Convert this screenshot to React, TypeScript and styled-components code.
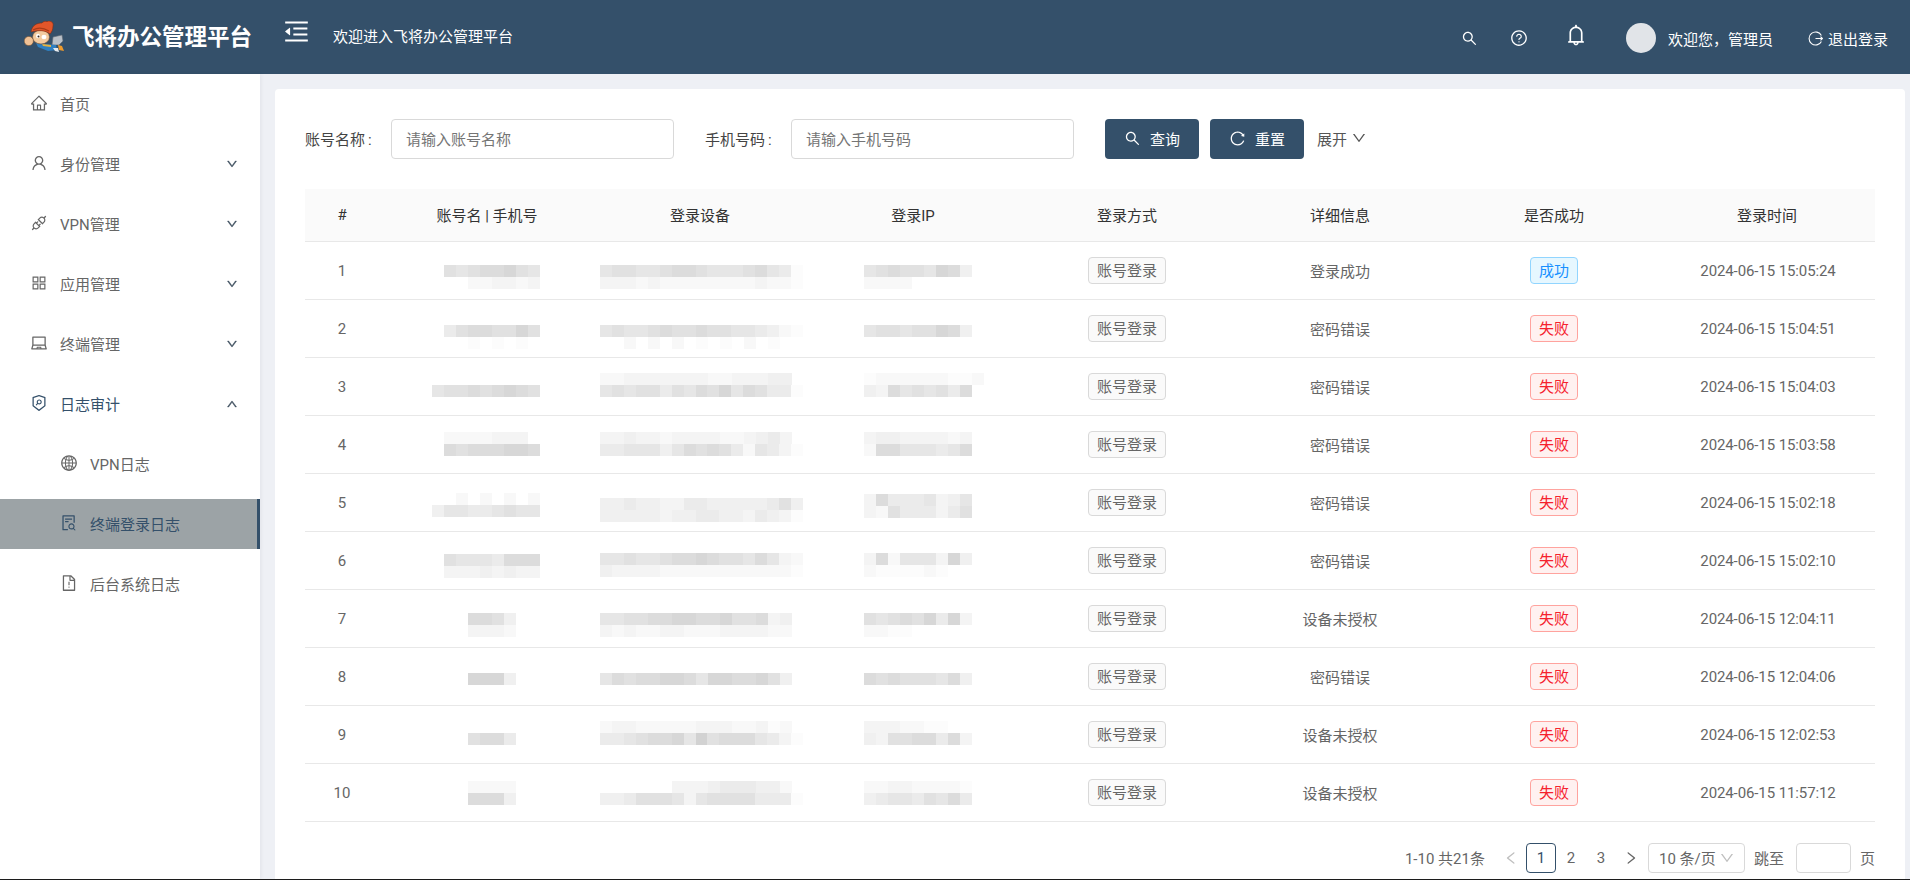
import { FC, ReactNode } from 'react';
import styled, { createGlobalStyle } from 'styled-components';
import {
  AiOutlineApi,
  AiOutlineAppstore,
  AiOutlineBell,
  AiOutlineDown,
  AiOutlineFileExclamation,
  AiOutlineFileSearch,
  AiOutlineGlobal,
  AiOutlineHome,
  AiOutlineLaptop,
  AiOutlineLeft,
  AiOutlineMenuFold,
  AiOutlineQuestionCircle,
  AiOutlineReload,
  AiOutlineRight,
  AiOutlineSearch,
  AiOutlineSecurityScan,
  AiOutlineUp,
  AiOutlineUser,
} from 'react-icons/ai';

const GlobalStyle = createGlobalStyle`
  html, body {
    margin: 0;
    padding: 0;
    background: #eef0f5;
  }
  body {
    font-family: Roboto, "Noto Sans CJK SC", sans-serif;
    font-size: 15px;
    color: #666;
  }
  * {
    box-sizing: border-box;
  }
`;

const Page = styled.div`
  height: 880px;
  display: flex;
  flex-direction: column;
  border-bottom: 1px solid #1c1c1c;
  overflow: hidden;
`;

const Header = styled.header`
  height: 74px;
  flex: none;
  display: flex;
  align-items: center;
  background: #34506a;
  color: #fff;
`;

const Brand = styled.div`
  width: 284px;
  flex: none;
  display: flex;
  align-items: center;
  padding-left: 24px;
  gap: 7px;
`;

const BrandName = styled.span`
  font-size: 22.5px;
  font-weight: 700;
  line-height: 30px;
  white-space: nowrap;
`;

const Collapse = styled.span`
  display: flex;
  margin: -11px 22px 0 -2px;
  font-size: 29px;
`;

const Welcome = styled.span`
  margin-top: -4px;
`;

const HeaderRight = styled.div`
  margin-left: auto;
  display: flex;
  align-items: center;
  padding: 2px 22px 0 0;
`;

const HeadIcon = styled.span<{ $gap: number; $size: number; $lift?: number }>`
  display: flex;
  font-size: ${p => p.$size}px;
  margin-right: ${p => p.$gap}px;
  margin-top: ${p => -(p.$lift ?? 0)}px;
`;

const Avatar = styled.span`
  width: 30px;
  height: 30px;
  border-radius: 50%;
  background: #e1e4e8;
  margin-right: 12px;
`;

const UserName = styled.span`
  margin-right: 35px;
`;

const Logout = styled.span`
  display: flex;
  align-items: center;
  gap: 5px;
`;

const Body = styled.div`
  flex: 1;
  min-height: 0;
  display: flex;
`;

const Sidebar = styled.nav`
  width: 260px;
  flex: none;
  background: #fff;
  box-shadow: 1px 0 4px rgba(0, 21, 41, 0.06);
`;

const NavItem = styled.div<{ $sub?: boolean; $active?: boolean; $open?: boolean }>`
  height: 50px;
  margin: 5px 0 10px;
  display: flex;
  align-items: center;
  padding: 0 19px 2px ${p => (p.$sub ? 60 : 30)}px;
  color: ${p => (p.$active || p.$open ? '#34506a' : '#666')};
  background: ${p => (p.$active ? '#9ca3a6' : 'transparent')};
  border-right: 3px solid ${p => (p.$active ? '#34506a' : 'transparent')};
`;

const NavIcon = styled.span`
  display: flex;
  font-size: 18px;
  margin-right: 12px;
`;

const NavArrow = styled.span`
  display: flex;
  margin: 2px 0 0 auto;
  font-size: 12px;
  color: #3f4f5f;
  svg {
    stroke: currentColor;
    stroke-width: 40;
  }
`;

const Main = styled.main`
  flex: 1;
  min-width: 0;
  padding: 15px 5px 0 15px;
`;

const Card = styled.section`
  height: 100%;
  background: #fff;
  border-radius: 4px 4px 0 0;
  padding: 30px 30px 0;
`;

const SearchBar = styled.form`
  height: 40px;
  display: flex;
  align-items: center;
  margin-bottom: 30px;
`;

const FieldLabel = styled.label`
  width: 86px;
  flex: none;
  padding-bottom: 2px;
  color: #444;
  white-space: nowrap;
`;

const Colon = styled.span`
  margin-left: 3px;
`;

const TextInput = styled.input<{ $gap: number }>`
  width: 283px;
  height: 40px;
  flex: none;
  margin-right: ${p => p.$gap}px;
  padding: 1px 14px 0;
  font: inherit;
  color: #666;
  background: #fff;
  border: 1px solid #d9d9d9;
  border-radius: 4px;
  outline: none;

  ::placeholder {
    color: #c4c4c4;
  }
`;

const Button = styled.button`
  width: 94px;
  height: 40px;
  flex: none;
  margin-right: 11px;
  padding: 0 0 2px;
  display: flex;
  align-items: center;
  justify-content: center;
  gap: 9px;
  font: inherit;
  color: #fff;
  background: #34506a;
  border: none;
  border-radius: 4px;
  svg {
    font-size: 17px;
  }
`;

const Expand = styled.span`
  display: flex;
  align-items: center;
  gap: 4px;
  margin-left: 2px;
  padding-bottom: 2px;
  color: #555;
  svg {
    font-size: 16px;
  }
`;

const Table = styled.table`
  width: 1570px;
  table-layout: fixed;
  border-collapse: collapse;
`;

const HeadCell = styled.th<{ $left?: number; $right?: number }>`
  height: 52px;
  padding: 0 ${p => p.$right ?? 0}px 0 ${p => p.$left ?? 0}px;
  font-weight: 400;
  color: #333;
  background: #fafafa;
  border-bottom: 1px solid #e8e8e8;
`;

const Row = styled.tr`
  height: 58px;
`;

const Cell = styled.td`
  padding: 0;
  text-align: center;
  border-bottom: 1px solid #e8e8e8;
`;

const NumCell = styled(Cell)`
  padding: 2px 10px 0 0;
`;

const TimeCell = styled(Cell)`
  padding: 2px 0 0 2px;
  letter-spacing: -0.1px;
`;

const BlurCell = styled(Cell)<{ $left: number; $top: number }>`
  padding: ${p => p.$top}px 0 0 ${p => p.$left}px;
  vertical-align: top;
`;

const BlurLine = styled.div`
  display: flex;
  height: 12px;
`;

const BlurBit = styled.span<{ $tone: string }>`
  width: 12px;
  height: 12px;
  background: ${p => p.$tone};
`;

const Tag = styled.span<{ $kind: 'plain' | 'ok' | 'fail' }>`
  display: inline-block;
  height: 27px;
  line-height: 26px;
  padding: 0 8px;
  border-radius: 4px;
  border: 1px solid ${p => (p.$kind === 'plain' ? '#d9d9d9' : p.$kind === 'ok' ? '#91d5ff' : '#ffa39e')};
  background: ${p => (p.$kind === 'plain' ? '#fafafa' : p.$kind === 'ok' ? '#e6f7ff' : '#fff1f0')};
  color: ${p => (p.$kind === 'plain' ? '#666' : p.$kind === 'ok' ? '#1890ff' : '#f5222d')};
`;

const Pager = styled.div`
  width: 1570px;
  height: 30px;
  margin-top: 21px;
  display: flex;
  align-items: center;
  justify-content: flex-end;
`;

const Total = styled.span`
  margin-right: 11px;
`;

const PageItem = styled.span<{ $active?: boolean; $muted?: boolean }>`
  width: 30px;
  height: 30px;
  display: flex;
  align-items: center;
  justify-content: center;
  border-radius: 4px;
  border: 1px solid ${p => (p.$active ? '#34506a' : 'transparent')};
  color: ${p => (p.$muted ? '#bfbfbf' : p.$active ? '#34506a' : '#666')};
  svg {
    font-size: 16px;
  }
`;

const SizeSelect = styled.span`
  width: 97px;
  height: 30px;
  margin: 0 9px 0 2px;
  padding: 0 9px 0 10px;
  display: flex;
  align-items: center;
  justify-content: space-between;
  white-space: nowrap;
  border: 1px solid #d9d9d9;
  border-radius: 4px;
  svg {
    color: #bfbfbf;
    font-size: 16px;
  }
`;

const JumpInput = styled.input`
  width: 55px;
  height: 30px;
  margin: 0 9px 0 12px;
  border: 1px solid #d9d9d9;
  border-radius: 4px;
  outline: none;
`;

// grey levels of the mosaic that hides account data in the reference
const TONES: Record<string, string> = {
  '0': '#d2d2d2',
  '1': '#d7d7d7',
  '2': '#dcdcdc',
  '3': '#e1e1e1',
  '4': '#e6e6e6',
  '5': '#ebebeb',
  '6': '#f0f0f0',
  '7': '#f4f4f4',
  '8': '#f8f8f8',
  '9': '#fcfcfc',
  ' ': 'transparent',
};

type Blurred = { top: number; lines: string[] };

type LogRow = {
  account: Blurred;
  device: Blurred;
  ip: Blurred;
  detail: string;
  ok?: boolean;
  time: string;
};

const rows: LogRow[] = [
  {
    account: { top: 23, lines: [' 34322134', '   887787'] },
    device: { top: 23, lines: ['43344322344432459', '77787888888887889'] },
    ip: { top: 23, lines: ['432334126', '8888'] },
    detail: '登录成功',
    ok: true,
    time: '2024-06-15 15:05:24',
  },
  {
    account: { top: 25, lines: [' 53223313', '   9 9 9'] },
    device: { top: 25, lines: ['43443233233445689', '  8 8 8 9 9 8 9'] },
    ip: { top: 25, lines: ['433433126'] },
    detail: '密码错误',
    time: '2024-06-15 15:04:51',
  },
  {
    account: { top: 27, lines: ['433232123'] },
    device: { top: 15, lines: ['8877777778877766', '43433534231423559'] },
    ip: { top: 15, lines: ['9888888998', '672434352'] },
    detail: '密码错误',
    time: '2024-06-15 15:04:03',
  },
  {
    account: { top: 16, lines: [' 8888777', ' 23222112'] },
    device: { top: 16, lines: ['7767787777887657', '55444642323584579'] },
    ip: { top: 16, lines: ['766777787', '822444542'] },
    detail: '密码错误',
    time: '2024-06-15 15:03:58',
  },
  {
    account: { top: 19, lines: ['  8 8 8 8', '644554344'] },
    device: { top: 24, lines: ['66566775566666536', '66666766556675679'] },
    ip: { top: 20, lines: ['725554764', '783555753'] },
    detail: '密码错误',
    time: '2024-06-15 15:02:18',
  },
  {
    account: { top: 22, lines: [' 34445222', ' 77767677'] },
    device: { top: 21, lines: ['44344322123342478', '67777888888888889'] },
    ip: { top: 21, lines: ['728444716', '8999989'] },
    detail: '密码错误',
    time: '2024-06-15 15:02:10',
  },
  {
    account: { top: 23, lines: ['   2236', '   7778'] },
    device: { top: 23, lines: ['4433221122133276', '7878877888777788'] },
    ip: { top: 23, lines: ['343231517', '8899'] },
    detail: '设备未授权',
    time: '2024-06-15 12:04:11',
  },
  {
    account: { top: 25, lines: ['   1116'] },
    device: { top: 25, lines: ['4232211241122136'] },
    ip: { top: 25, lines: ['232333426'] },
    detail: '密码错误',
    time: '2024-06-15 12:04:06',
  },
  {
    account: { top: 27, lines: ['   3225'] },
    device: { top: 15, lines: ['8778888877788798', '55432214032224579'] },
    ip: { top: 15, lines: ['7778899', '673322527'] },
    detail: '设备未授权',
    time: '2024-06-15 12:02:53',
  },
  {
    account: { top: 17, lines: ['   8888', '   2226'] },
    device: { top: 17, lines: ['      7776555668', '66533347433335559'] },
    ip: { top: 17, lines: ['887788889', '654453425'] },
    detail: '设备未授权',
    time: '2024-06-15 11:57:12',
  },
];

const Blur: FC<{ lines: string[] }> = ({ lines }) => (
  <>
    {lines.map((line, i) => (
      <BlurLine key={i}>
        {line.split('').map((c, j) => (
          <BlurBit key={j} $tone={TONES[c]} />
        ))}
      </BlurLine>
    ))}
  </>
);

const Logo: FC = () => (
  <svg width="41" height="32" viewBox="0 0 41 32">
    <path d="M29 16l9-2 1 6-4 4-7 0z" fill="#b9c0c8" stroke="#5c6670" strokeWidth="0.6" />
    <path d="M12 22l9 1 11 1 1 5-9 1-10-4z" fill="#2f7fc0" />
    <path d="M18 23l9 1 0 2-8-1z" fill="#e8b23c" />
    <path d="M34 24l4 1 2 5-5-1z" fill="#ef9a2c" />
    <path d="M29 27l5 0 1 4-4-1z" fill="#e6eaee" />
    <ellipse cx="17" cy="16" rx="8.5" ry="7" fill="#f3cba0" stroke="#6b4a30" strokeWidth="0.6" />
    <path d="M7 11C8 4 13 2 18 2c1-1.500 3-2 5-1.500C27-1 30 2 29 5c0 3-1 6-3 8-5-4-11-4-19-2z" fill="#e2562a" stroke="#7a2e14" strokeWidth="0.6" />
    <path d="M9 9c5-3 11-2 16 1" stroke="#a83c18" strokeWidth="1.200" fill="none" />
    <ellipse cx="14" cy="15" rx="2" ry="2.300" fill="#fff" />
    <circle cx="14.500" cy="15.500" r="1" fill="#3a2a20" />
    <ellipse cx="20" cy="16" rx="2.500" ry="2.200" fill="#fff" />
    <circle cx="4.800" cy="20" r="4.600" fill="#f0c195" stroke="#7c5534" strokeWidth="0.6" />
  </svg>
);

const LogoutIcon: FC = () => (
  <svg width="15" height="15" viewBox="0 0 15 15" fill="none" stroke="currentColor" strokeWidth="1.1">
    <path d="M13.4 4.6A6.500 6.500 0 1 0 13.4 10.4" />
    <path d="M7.500 7.500h7M12.500 5.600l2 1.900-2 1.900" />
  </svg>
);

type Nav = { icon: ReactNode; text: string; arrow?: 'up' | 'down'; sub?: boolean; active?: boolean; open?: boolean };

const nav: Nav[] = [
  { icon: <AiOutlineHome />, text: '首页' },
  { icon: <AiOutlineUser />, text: '身份管理', arrow: 'down' },
  { icon: <AiOutlineApi />, text: 'VPN管理', arrow: 'down' },
  { icon: <AiOutlineAppstore />, text: '应用管理', arrow: 'down' },
  { icon: <AiOutlineLaptop />, text: '终端管理', arrow: 'down' },
  { icon: <AiOutlineSecurityScan />, text: '日志审计', arrow: 'up', open: true },
  { icon: <AiOutlineGlobal />, text: 'VPN日志', sub: true },
  { icon: <AiOutlineFileSearch />, text: '终端登录日志', sub: true, active: true },
  { icon: <AiOutlineFileExclamation />, text: '后台系统日志', sub: true },
];

const columns = [84, 196, 218, 220, 208, 218, 210, 216];

export default function App() {
  return (
    <Page>
      <GlobalStyle />
      <Header>
        <Brand>
          <Logo />
          <BrandName>飞将办公管理平台</BrandName>
        </Brand>
        <Collapse>
          <AiOutlineMenuFold />
        </Collapse>
        <Welcome>欢迎进入飞将办公管理平台</Welcome>
        <HeaderRight>
          <HeadIcon $gap={32} $size={17}>
            <AiOutlineSearch />
          </HeadIcon>
          <HeadIcon $gap={36} $size={18}>
            <AiOutlineQuestionCircle />
          </HeadIcon>
          <HeadIcon $gap={38} $size={24} $lift={6}>
            <AiOutlineBell />
          </HeadIcon>
          <Avatar />
          <UserName>欢迎您，管理员</UserName>
          <Logout>
            <LogoutIcon />
            退出登录
          </Logout>
        </HeaderRight>
      </Header>
      <Body>
        <Sidebar>
          {nav.map(item => (
            <NavItem key={item.text} $sub={item.sub} $active={item.active} $open={item.open}>
              <NavIcon>{item.icon}</NavIcon>
              {item.text}
              {item.arrow && <NavArrow>{item.arrow === 'up' ? <AiOutlineUp /> : <AiOutlineDown />}</NavArrow>}
            </NavItem>
          ))}
        </Sidebar>
        <Main>
          <Card>
            <SearchBar>
              <FieldLabel>
                账号名称<Colon>:</Colon>
              </FieldLabel>
              <TextInput $gap={31} placeholder="请输入账号名称" />
              <FieldLabel>
                手机号码<Colon>:</Colon>
              </FieldLabel>
              <TextInput $gap={31} placeholder="请输入手机号码" />
              <Button type="button">
                <AiOutlineSearch />
                查询
              </Button>
              <Button type="button">
                <AiOutlineReload />
                重置
              </Button>
              <Expand>
                展开
                <AiOutlineDown />
              </Expand>
            </SearchBar>
            <Table>
              <colgroup>
                {columns.map((w, i) => (
                  <col key={i} width={w} />
                ))}
              </colgroup>
              <thead>
                <tr>
                  <HeadCell $right={10}>#</HeadCell>
                  <HeadCell>账号名 | 手机号</HeadCell>
                  <HeadCell $left={12}>登录设备</HeadCell>
                  <HeadCell>登录IP</HeadCell>
                  <HeadCell>登录方式</HeadCell>
                  <HeadCell>详细信息</HeadCell>
                  <HeadCell>是否成功</HeadCell>
                  <HeadCell>登录时间</HeadCell>
                </tr>
              </thead>
              <tbody>
                {rows.map((row, i) => (
                  <Row key={i}>
                    <NumCell>{i + 1}</NumCell>
                    <BlurCell $left={43} $top={row.account.top}>
                      <Blur lines={row.account.lines} />
                    </BlurCell>
                    <BlurCell $left={15} $top={row.device.top}>
                      <Blur lines={row.device.lines} />
                    </BlurCell>
                    <BlurCell $left={61} $top={row.ip.top}>
                      <Blur lines={row.ip.lines} />
                    </BlurCell>
                    <Cell>
                      <Tag $kind="plain">账号登录</Tag>
                    </Cell>
                    <Cell>{row.detail}</Cell>
                    <Cell>
                      <Tag $kind={row.ok ? 'ok' : 'fail'}>{row.ok ? '成功' : '失败'}</Tag>
                    </Cell>
                    <TimeCell>{row.time}</TimeCell>
                  </Row>
                ))}
              </tbody>
            </Table>
            <Pager>
              <Total>1-10 共21条</Total>
              <PageItem $muted>
                <AiOutlineLeft />
              </PageItem>
              <PageItem $active>1</PageItem>
              <PageItem>2</PageItem>
              <PageItem>3</PageItem>
              <PageItem>
                <AiOutlineRight />
              </PageItem>
              <SizeSelect>
                10 条/页
                <AiOutlineDown />
              </SizeSelect>
              跳至
              <JumpInput />页
            </Pager>
          </Card>
        </Main>
      </Body>
    </Page>
  );
}
